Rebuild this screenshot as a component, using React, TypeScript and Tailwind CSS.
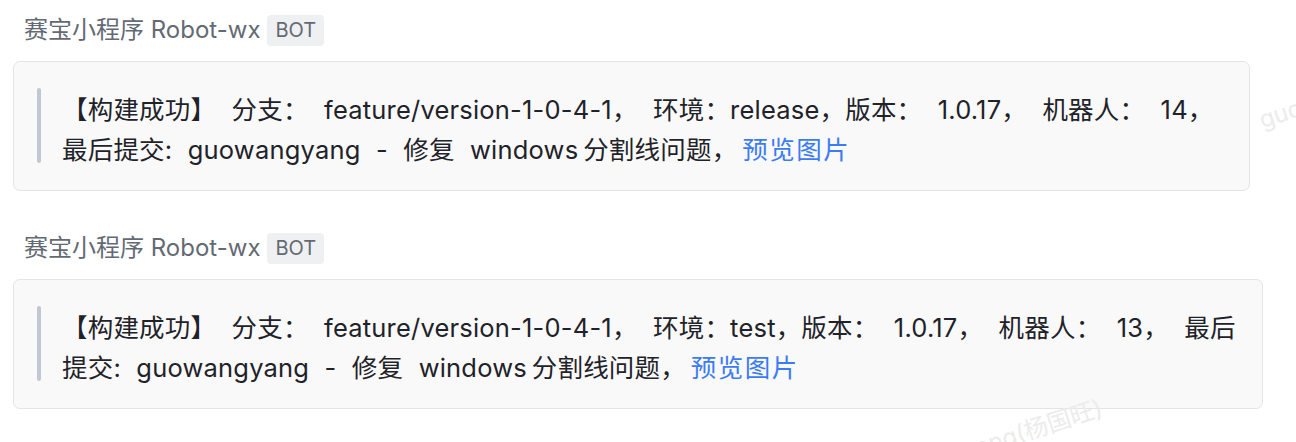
import React from "react";

const font = {
    fontFamily: 'Inter, "Noto Sans CJK SC", sans-serif',
};

interface Message {
    sender: string;
    text: string;
    width: string;
}

const messages: Message[] = [
    {
        sender: "赛宝小程序 Robot-wx",
        text: "【构建成功】 分支： feature/version-1-0-4-1， 环境：release，版本： 1.0.17， 机器人： 14， 最后提交: guowangyang - 修复 windows\u2009分割线问题，\u2009",
        width: "w-[1237px]",
    },
    {
        sender: "赛宝小程序 Robot-wx",
        text: "【构建成功】 分支： feature/version-1-0-4-1， 环境：test，版本： 1.0.17， 机器人： 13， 最后提交: guowangyang - 修复 windows\u2009分割线问题，\u2009",
        width: "w-[1250px]",
    },
];

function BotMessage({ msg }: { msg: Message }) {
    return (
        <div className="flex flex-col">
            {/* Sender */}
            <div className="flex items-center gap-[7px] pl-[11px] h-[32px]">
                <span className="text-[24px] text-[#646a73] leading-none">{msg.sender}</span>
                <span className="flex items-center h-[31px] bg-[#eff0f1] text-[#646a73] text-[20px] leading-none rounded-[4px] px-[8px]">
                    BOT
                </span>
            </div>

            {/* Card */}
            <div
                className={`mt-[15px] ${msg.width} bg-[#f9f9f9] border border-[#e3e4e6] rounded-[7px] pl-[23px] pr-[20px] pt-[28px] pb-[20px]`}
            >
                <div className="flex gap-[21px]">
                    <div className="w-[4px] h-[75px] -mt-[2px] shrink-0 rounded-full bg-[#c1c7d3]" />
                    <p className="text-[25.5px] leading-[40px] tracking-[0.2px] text-[#1f2329] [word-spacing:8px]">
                        {msg.text}
                        <span className="text-[#3b7bf6] tracking-[1.5px]">预览图片</span>
                    </p>
                </div>
            </div>
        </div>
    );
}

export default function App() {
    return (
        <div className="relative w-[1296px] h-[442px] overflow-hidden bg-white" style={font}>
            <div className="flex flex-col gap-[41px] pl-[13px] pt-[14px]">
                {messages.map((m, i) => (
                    <BotMessage key={i} msg={m} />
                ))}
            </div>

            {/* Watermark */}
            <span className="absolute left-[1256px] top-[78px] -rotate-[18deg] text-[24px] text-[#ececec] pointer-events-none whitespace-nowrap">
                guowangyang
            </span>
            <span className="absolute left-[960px] top-[412px] -rotate-[18deg] text-[24px] text-[#ececec] pointer-events-none whitespace-nowrap">
                yang(杨国旺)
            </span>
        </div>
    );
}
